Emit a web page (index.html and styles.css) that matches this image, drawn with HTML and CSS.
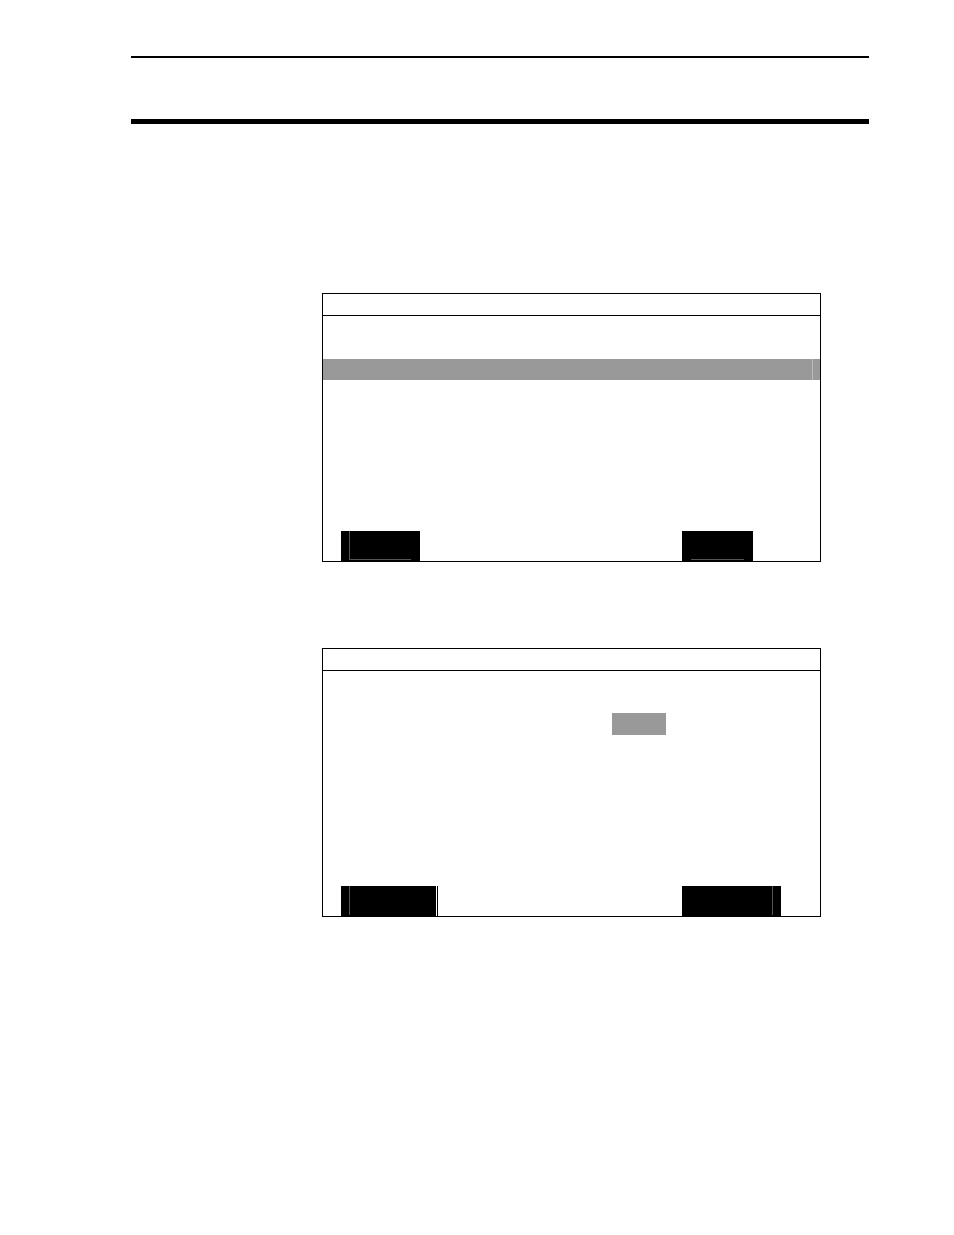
FILE: index.html
```html
<!DOCTYPE html>
<html lang="en">
<head>
    <meta charset="utf-8">
    <title>Display Screens</title>
    <link rel="stylesheet" href="styles.css">
</head>
<body>
    <header class="page-header"></header>

    <main class="screens">
        <section class="screen">
            <div class="screen-title"></div>
            <div class="screen-body">
                <div class="selected-row"></div>
            </div>
            <div class="softkeys">
                <button class="key key-medium" type="button" aria-label="Left key"><span class="face face-left face-bottom"></span></button>
                <button class="key key-small" type="button" aria-label="Right key"><span class="face face-bottom"></span></button>
            </div>
        </section>

        <section class="screen">
            <div class="screen-title"></div>
            <div class="screen-body">
                <div class="field-row">
                    <div class="selected-field"></div>
                </div>
            </div>
            <div class="softkeys">
                <button class="key key-large key-edge" type="button" aria-label="Left key"><span class="face face-left"></span></button>
                <button class="key key-wide" type="button" aria-label="Right key"><span class="face face-right"></span></button>
            </div>
        </section>
    </main>
</body>
</html>
```

FILE: styles.css
```css
* {
    box-sizing: border-box;
    margin: 0;
    padding: 0;
}

body {
    padding: 56px 85px 56px 131px;
    background: #fff;
    font-family: "Liberation Sans", Arial, sans-serif;
}

.page-header {
    height: 68px;
    border-top: 2px solid #000;
    border-bottom: 5px solid #000;
}

.screens {
    display: flex;
    flex-direction: column;
    gap: 86px;
    padding: 169px 48px 0 191px;
}

.screen {
    border: 1px solid #000;
}

.screen-title {
    height: 22px;
    border-bottom: 1px solid #000;
}

.screen-body {
    min-height: 215px;
    padding-top: 42px;
}

/* highlighted list row */
.selected-row {
    height: 22px;
    padding-right: 7px;
    border-top: 1px solid #fff;
    background: linear-gradient(#bbb, #bbb) right 7px top / 1px 100% no-repeat #999;
}

/* highlighted value */
.field-row {
    display: grid;
    grid-template-columns: 54px;
    padding-left: 289px;
}

.selected-field {
    height: 22px;
    background: #999;
}

.softkeys {
    display: grid;
    grid-template-columns: 341fr 138fr;
    padding-left: 18px;
}

.key {
    display: flex;
    height: 30px;
    padding: 0 8px 1px;
    border: 0;
    background: #000;
}

.key-small {
    width: 71px;
    padding: 0 9px 1px;
}

.key-medium {
    width: 79px;
    padding-right: 9px;
}

.key-large {
    width: 95px;
}

.key-wide {
    width: 99px;
}

.key-edge {
    box-shadow: 1px 0 #fff, 2px 0 #000;
}

.face {
    flex: 1;
    align-self: stretch;
}

.face-left {
    border-left: 1px solid #555;
}

.face-right {
    border-right: 1px solid #555;
}

.face-bottom {
    border-bottom: 1px solid #555;
}
```
